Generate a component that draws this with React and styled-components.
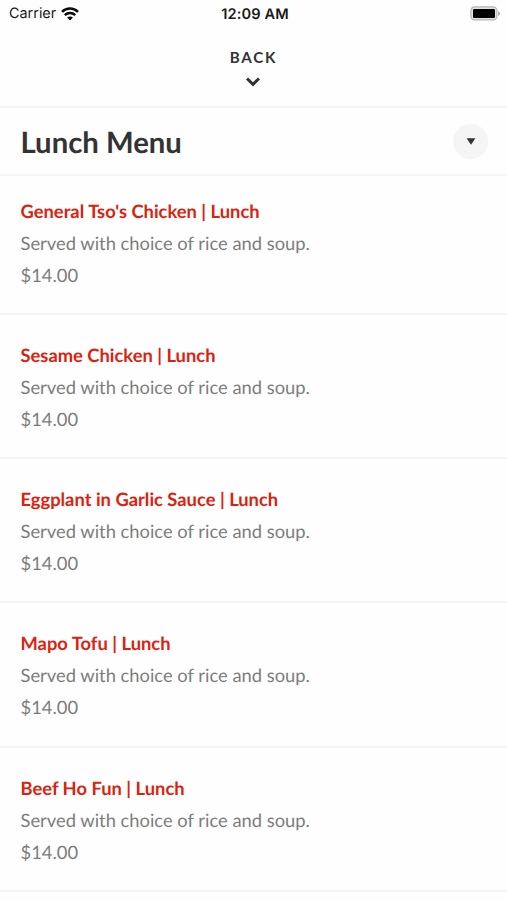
import React from 'react'
import styled, { createGlobalStyle } from 'styled-components'

const dishes = [
  { name: "General Tso's Chicken | Lunch", price: '$14.00' },
  { name: 'Sesame Chicken | Lunch', price: '$14.00' },
  { name: 'Eggplant in Garlic Sauce | Lunch', price: '$14.00' },
  { name: 'Mapo Tofu | Lunch', price: '$14.00' },
  { name: 'Beef Ho Fun | Lunch', price: '$14.00' },
]

function App() {
  return (
    <>
      <GlobalStyle />
      <Screen>
        <StatusBar>
          <Carrier>
            Carrier
            <svg width="18" height="14" viewBox="0 0 18 14" fill="none" stroke="#080808" strokeWidth="2.5">
              <path d="M1 4.8C5.5.5 12.5.5 17 4.8" />
              <path d="M3.8 8.1c3-2.8 7.4-2.8 10.4 0" />
              <path d="M6.1 10.6c1.7-1.6 4.1-1.6 5.8 0L9 13.5z" fill="#080808" stroke="none" />
            </svg>
          </Carrier>
          <Time>12:09 AM</Time>
          <Battery>
            <svg width="31" height="15" viewBox="0 0 31 15">
              <rect x="0.9" y="0.9" width="26" height="13" rx="3.8" fill="#e4e4e4" stroke="#b4b4b4" strokeWidth="1.2" />
              <rect x="3" y="3" width="22" height="9" rx="1.2" fill="#000" />
              <path d="M28.2 4.9q3.4 2.6 0 5.2z" fill="#a0a0a0" />
            </svg>
          </Battery>
        </StatusBar>
        <BackButton>
          <span>BACK</span>
          <svg width="16" height="12" viewBox="0 0 16 12" fill="none" stroke="#333" strokeWidth="3">
            <path d="M2 2.5l6 5.8 6-5.8" />
          </svg>
        </BackButton>
        <MenuHeader>
          <h1>Lunch Menu</h1>
          <RoundButton aria-label="Choose menu">
            <svg width="10" height="7" viewBox="0 0 10 7">
              <path d="M.6.3h8.8L5 6.7z" fill="#333" />
            </svg>
          </RoundButton>
        </MenuHeader>
        <List>
          {dishes.map((dish) => (
            <Item key={dish.name}>
              <Name>{dish.name}</Name>
              <Text>Served with choice of rice and soup.</Text>
              <Text>{dish.price}</Text>
            </Item>
          ))}
        </List>
      </Screen>
    </>
  )
}

const GlobalStyle = createGlobalStyle`
  * {
    box-sizing: border-box;
  }
  body {
    margin: 0;
    background: #fff;
  }
`

const Screen = styled.main`
  height: 900px;
  overflow: hidden;
  background: #fefefe;
  font-family: Lato, sans-serif;
  color: #333;
  text-rendering: geometricPrecision;
`

const StatusBar = styled.div`
  display: grid;
  grid-template-columns: 1fr auto 1fr;
  align-items: center;
  height: 27px;
  padding: 0 6px 0 9px;
  font-family: Inter, sans-serif;
  font-size: 14.4px;
  line-height: 18px;
  color: #1a1a1a;
`

const Carrier = styled.div`
  display: flex;
  align-items: center;
  gap: 5px;
  padding-top: 1px;
`

const Time = styled.div`
  padding-top: 1px;
  font-size: 14.6px;
  font-weight: 600;
  letter-spacing: 0.1px;
`

const Battery = styled.div`
  display: flex;
  justify-content: flex-end;
`

const BackButton = styled.button`
  display: flex;
  flex-direction: column;
  align-items: center;
  width: 100%;
  height: 81px;
  padding: 20px 0 0;
  border: 0;
  border-bottom: 2px solid #f5f5f5;
  background: none;
  font-family: inherit;
  font-size: 15.2px;
  font-weight: 700;
  line-height: 20px;
  letter-spacing: 1.7px;
  color: #333;

  svg {
    margin: 9px 1px 0 0;
  }
`

const MenuHeader = styled.header`
  display: flex;
  align-items: center;
  justify-content: space-between;
  height: 68px;
  padding: 0 19px 0 20.5px;
  border-bottom: 2px solid #f5f5f5;

  h1 {
    margin: 3px 0 0;
    font-size: 29.3px;
    font-weight: 700;
    line-height: 36px;
  }
`

const RoundButton = styled.button`
  display: flex;
  align-items: center;
  justify-content: center;
  width: 35px;
  height: 35px;
  padding: 0;
  border: 0;
  border-radius: 50%;
  background: #f5f5f5;
`

const List = styled.ul`
  margin: 0;
  padding: 0;
  list-style: none;
`

const Item = styled.li`
  height: 144.2px;
  padding: 24px 20.5px 0;
  border-bottom: 2px solid #f5f5f5;

  &:first-child {
    height: 139px;
    padding-top: 19px;
  }
`

const Name = styled.h2`
  margin: 0;
  font-size: 18.35px;
  font-weight: 700;
  line-height: 32px;
  color: #d9230f;
`

const Text = styled.p`
  margin: 0;
  font-size: 18.35px;
  line-height: 32px;
  color: #7d7d7d;
`

export default App
